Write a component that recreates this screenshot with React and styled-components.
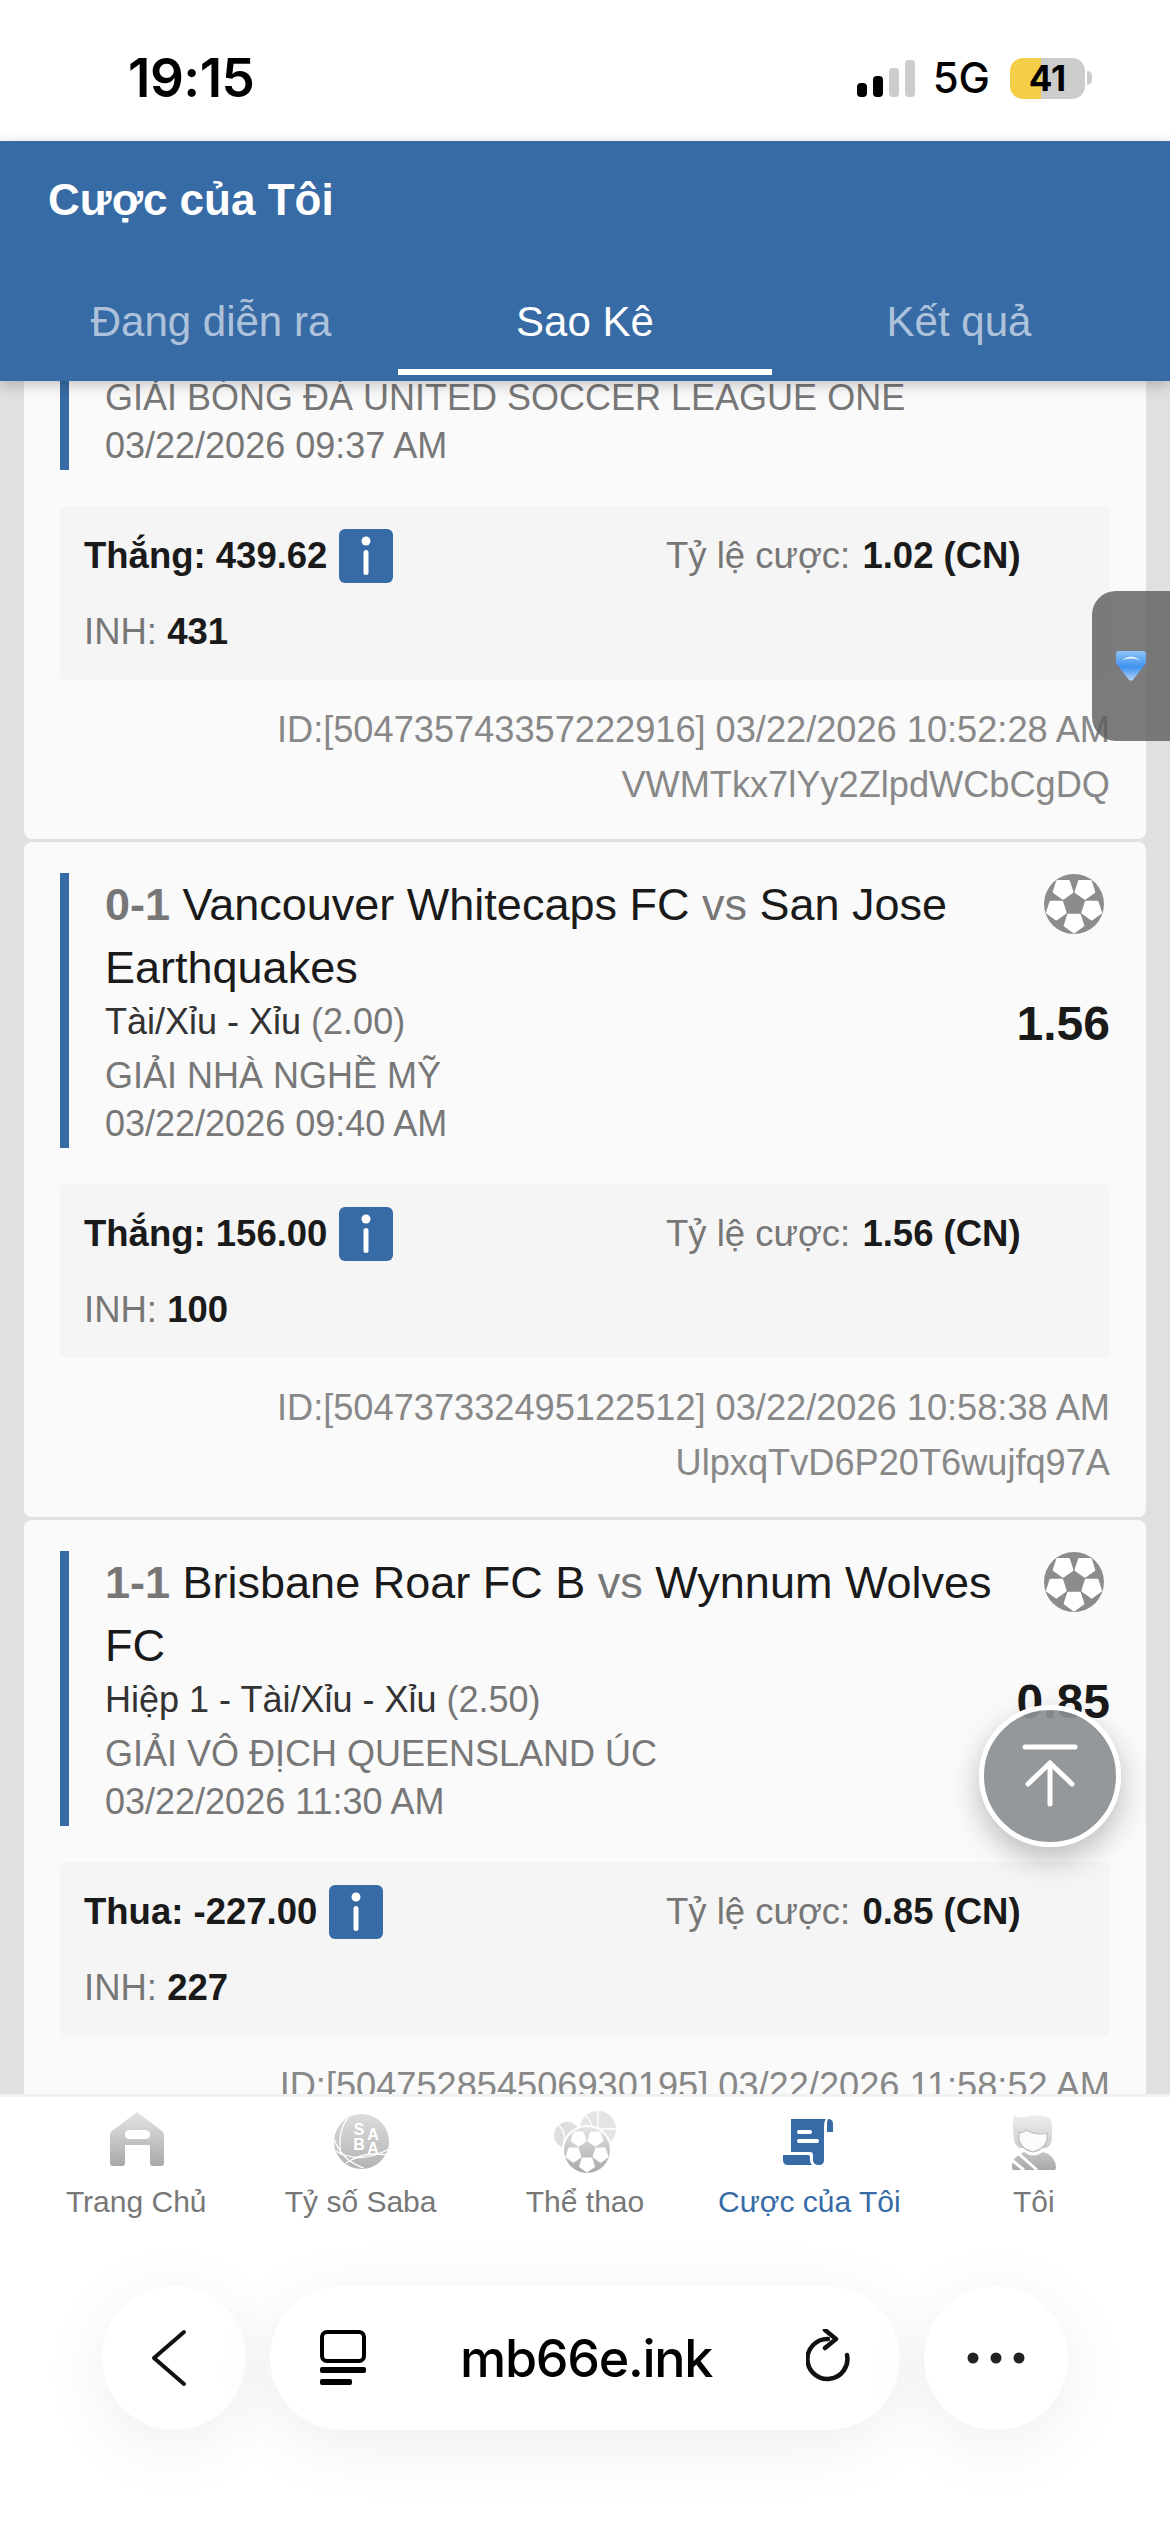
import React from 'react';
import styled, { createGlobalStyle } from 'styled-components';

const BLUE = '#376ba5';

const GlobalStyle = createGlobalStyle`
  html, body { margin: 0; padding: 0; background: #fff; }
  body { font-family: "Liberation Sans", Arial, sans-serif; }
  * { box-sizing: border-box; }
`;

const Page = styled.div`
  position: relative;
  width: 1170px;
  height: 2532px;
  overflow: hidden;
  display: flex;
  flex-direction: column;
  background: #fff;
`;

const StatusBar = styled.div`
  height: 141px;
  flex: none;
  display: flex;
  justify-content: space-between;
  align-items: center;
  padding: 15px 85px 0 128px;
  font-family: Inter, "Liberation Sans", sans-serif;
  color: #000;
`;

const Time = styled.div`
  font-size: 53px;
  font-weight: 600;
  letter-spacing: -0.5px;
  line-height: 1;
`;

const StatusRight = styled.div`
  display: flex;
  align-items: center;
`;

const Signal = styled.div`
  display: flex;
  align-items: flex-end;
  gap: 6px;
  height: 37px;
  margin-right: 18px;
`;

const SignalBar = styled.span`
  display: block;
  width: 10px;
  height: ${(p) => p.$h}px;
  border-radius: 4px;
  background: ${(p) => (p.$on ? '#000' : '#ccc')};
`;

const NetLabel = styled.div`
  font-size: 42px;
  font-weight: 500;
  line-height: 1;
  margin-right: 20px;
`;

const Battery = styled.div`
  position: relative;
  width: 75px;
  height: 41px;
  border-radius: 13px;
  background: linear-gradient(90deg, #f5ce47 0 31px, #cccccc 31px);
  font-size: 35px;
  font-weight: 700;
  line-height: 41px;
  text-align: center;

  &::after {
    content: '';
    position: absolute;
    right: -7px;
    top: 13px;
    width: 5px;
    height: 14px;
    border-radius: 0 6px 6px 0;
    background: #ccc;
  }
`;

const Header = styled.header`
  flex: none;
  height: 240px;
  background: ${BLUE};
  position: relative;
  z-index: 3;
  box-shadow: 0 4px 14px rgba(0, 0, 0, 0.22);
  padding: 0 24px;
`;

const Title = styled.h1`
  margin: 0;
  height: 118px;
  padding: 34px 0 0 24px;
  font-size: 44px;
  line-height: 50px;
  font-weight: 700;
  color: #fff;
`;

const Tabs = styled.div`
  display: grid;
  grid-template-columns: repeat(3, 1fr);
`;

const Tab = styled.div`
  height: 116px;
  padding-top: 38px;
  text-align: center;
  font-size: 42px;
  line-height: 50px;
  color: ${(p) => (p.$active ? '#fff' : 'rgba(255,255,255,0.62)')};
  border-bottom: 6px solid ${(p) => (p.$active ? '#fff' : 'transparent')};
`;

const List = styled.main`
  flex: 1;
  min-height: 0;
  overflow: hidden;
  background: #e0e0e0;
  padding: 0 24px;
  display: flex;
  flex-direction: column;
  gap: 3px;
`;

const Card = styled.section`
  flex: none;
  background: #fafafa;
  border-radius: ${(p) => (p.$cut ? '0 0 8px 8px' : '8px')};
  padding: ${(p) => (p.$cut ? '0' : '31px')} 36px 27px;
`;

const MatchBlock = styled.div`
  position: relative;
  border-left: 9px solid ${BLUE};
  padding-left: 36px;
  margin-top: ${(p) => (p.$cut ? '-14px' : '0')};
  display: flex;
  flex-direction: column;
`;

const MatchTitle = styled.div`
  font-size: 45px;
  line-height: 63px;
  color: #1a1a1a;
  padding-right: 100px;
`;

const Score = styled.b`
  color: #777;
`;

const Vs = styled.span`
  color: #777;
`;

const BallSlot = styled.div`
  position: absolute;
  top: 0;
  right: 5px;
  width: 62px;
  height: 62px;
`;

const Odds = styled.div`
  position: absolute;
  right: 0;
  top: 123px;
  font-size: 48px;
  line-height: 56px;
  font-weight: 700;
  color: #1a1a1a;
`;

const Market = styled.div`
  font-size: 36px;
  line-height: 46px;
  color: #333;
`;

const Muted = styled.span`
  color: #777;
`;

const League = styled.div`
  font-size: 36px;
  line-height: 46px;
  margin-top: 8px;
  color: #777;
`;

const DateLine = styled.div`
  font-size: 36px;
  line-height: 46px;
  margin-top: 2px;
  margin-bottom: 1px;
  color: #777;
`;

const InfoBox = styled.div`
  margin-top: 36px;
  height: 174px;
  background: #f5f5f5;
  border-radius: 6px;
  padding: 23px 24px 0;
  display: grid;
  grid-template-columns: 582px 1fr;
  grid-auto-rows: 54px;
  row-gap: 22px;
  align-items: center;
  font-size: 36.5px;
  color: #777;
`;

const Cell = styled.div`
  display: flex;
  align-items: center;
  white-space: pre;
`;

const Strong = styled.b`
  color: #1a1a1a;
`;

const OddsValue = styled(Strong)`
  margin-left: 2px;
`;

const InfoBtn = styled.span`
  width: 54px;
  height: 54px;
  margin-left: 12px;
  border-radius: 6px;
  background: ${BLUE};
  display: flex;
  align-items: center;
  justify-content: center;
`;

const Ids = styled.div`
  margin-top: 22px;
  text-align: right;
  font-size: 36.2px;
  line-height: 55px;
  color: #888;
`;

const BottomNav = styled.nav`
  flex: none;
  position: relative;
  z-index: 3;
  height: 146px;
  background: #fff;
  border-top: 3px solid #f0f0f0;
  padding: 0 24px;
  display: grid;
  grid-template-columns: repeat(5, 1fr);
`;

const NavItem = styled.div`
  display: flex;
  flex-direction: column;
  align-items: center;
  color: ${(p) => (p.$active ? BLUE : '#777')};
  font-size: 30px;
  line-height: 36px;
  padding-top: 8px;
`;

const NavIcon = styled.svg`
  width: 70px;
  height: 70px;
  margin-bottom: 9px;
  display: block;
`;

const BrowserBar = styled.div`
  flex: none;
  height: 292px;
  position: relative;
  z-index: 3;
  background: #fff;
  padding: 46px 102px 0;
  display: flex;
  gap: 24px;
  align-items: flex-start;
`;

const RoundBtn = styled.div`
  width: 144px;
  height: 144px;
  flex: none;
  border-radius: 72px;
  background: #fff;
  box-shadow: 0 14px 70px rgba(0, 0, 0, 0.07);
  display: flex;
  align-items: center;
  justify-content: center;
`;

const UrlPill = styled.div`
  flex: 1;
  height: 144px;
  border-radius: 72px;
  background: #fff;
  box-shadow: 0 14px 70px rgba(0, 0, 0, 0.07);
  display: flex;
  align-items: center;
  justify-content: space-between;
  padding: 0 46px 0 50px;
`;

const UrlText = styled.div`
  font-family: Inter, "Liberation Sans", sans-serif;
  font-size: 52px;
  font-weight: 500;
  letter-spacing: -1.3px;
  color: #000;
`;

const SideTab = styled.div`
  position: absolute;
  z-index: 4;
  right: 0;
  top: 591px;
  width: 78px;
  height: 150px;
  border-radius: 24px 0 0 24px;
  background: rgba(95, 95, 95, 0.82);
  display: flex;
  align-items: center;
  padding-left: 24px;
`;

const ToTop = styled.div`
  position: absolute;
  z-index: 4;
  left: 979px;
  top: 1705px;
  width: 142px;
  height: 142px;
  border-radius: 50%;
  border: 5px solid #fff;
  background: rgba(140, 143, 147, 0.92);
  box-shadow: 0 12px 30px rgba(0, 0, 0, 0.25);
  display: flex;
  align-items: center;
  justify-content: center;
`;

// football: grey disc with five white patches round a centre patch
const pentagon = (cx, cy, r, start) =>
  [0, 1, 2, 3, 4]
    .map((i) => {
      const a = ((start + i * 72) * Math.PI) / 180;
      return `${(cx + r * Math.cos(a)).toFixed(2)},${(cy + r * Math.sin(a)).toFixed(2)}`;
    })
    .join(' ');

const BallPatches = ({ cx, cy, r, fill }) => (
  <g fill={fill} stroke={fill} strokeLinejoin="round" strokeWidth={r * 0.08}>
    {[90, 162, 234, 306, 18].map((deg) => {
      const a = (deg * Math.PI) / 180;
      return (
        <polygon
          key={deg}
          points={pentagon(cx + r * 0.62 * Math.cos(a), cy + r * 0.62 * Math.sin(a), r * 0.32, deg)}
        />
      );
    })}
  </g>
);

const Ball = () => (
  <svg width="62" height="62" viewBox="0 0 62 62">
    <circle cx="31" cy="31" r="30" fill="#8c8c8c" />
    <BallPatches cx={31} cy={31} r={30} fill="#fff" />
  </svg>
);

const GreyGradient = ({ id, from = '#e4e4e4', to = '#a8a8a8' }) => (
  <defs>
    <linearGradient id={id} x1="0" y1="0" x2="0" y2="1">
      <stop offset="0" stopColor={from} />
      <stop offset="1" stopColor={to} />
    </linearGradient>
  </defs>
);

const HomeIcon = () => (
  <NavIcon viewBox="0 0 70 70">
    <GreyGradient id="home" />
    <path
      fill="url(#home)"
      fillRule="evenodd"
      d="M36 7 L61 26 Q63 28 63 30 V58 Q63 61 60 61 H52 Q49 61 49 58 V40 H24 V58 Q24 61 21 61 H12 Q9 61 9 58 V30 Q9 28 11 26 Z M29 25 Q24 25 24 29.5 Q24 34 29 34 H44 Q49 34 49 29.5 Q49 25 44 25 Z"
    />
  </NavIcon>
);

const SabaIcon = () => (
  <NavIcon viewBox="0 0 70 70">
    <GreyGradient id="saba" from="#dcdcdc" to="#b4b4b4" />
    <circle cx="35.5" cy="36.5" r="27.5" fill="url(#saba)" />
    <g fill="none" stroke="#fff" strokeWidth="1.3">
      <path d="M8 34 Q16 56 38 63" />
      <path d="M10 46 Q34 60 63 44" />
      <path d="M20 58 Q38 46 61 50" />
      <path d="M22 13 Q11 26 15 50" />
    </g>
    <g fill="#fff" fontFamily="Liberation Sans" fontWeight="700" fontSize="16" textAnchor="middle">
      <text x="33" y="30">S</text>
      <text x="47" y="35">A</text>
      <text x="33" y="45">B</text>
      <text x="47" y="49">A</text>
    </g>
  </NavIcon>
);

const SportsIcon = () => (
  <NavIcon viewBox="0 0 70 70">
    <GreyGradient id="sports" />
    <circle cx="17" cy="30" r="13" fill="#dedede" />
    <path d="M9 20 Q18 30 13 42" fill="none" stroke="#fff" strokeWidth="1.3" />
    <circle cx="48" cy="24" r="18" fill="#e4e4e4" />
    <path d="M48 6 V30 M30 24 H66 M36 11 Q46 20 38 34" fill="none" stroke="#fff" strokeWidth="1.3" />
    <circle cx="37" cy="45" r="25" fill="#fff" />
    <circle cx="37" cy="45" r="23" fill="url(#sports)" />
    <BallPatches cx={37} cy={45} r={23} fill="#fff" />
  </NavIcon>
);

const BillIcon = () => (
  <NavIcon viewBox="0 0 70 70">
    <path
      fill={BLUE}
      d="M17 14 H52 Q50 16 50 22 V55 Q50 60 45 60 Q39 60 39 55 V50 Q39 47 36 47 H17 Z"
    />
    <path fill={BLUE} d="M54 14 Q59 14 59 19 V27 H53 V19 Q53 16 54 14 Z" />
    <path fill={BLUE} d="M9 50 H34 Q36 50 36 52 V55 Q36 58 38 60 H14 Q9 60 9 55 Z" />
    <rect x="23" y="25" width="15" height="4" rx="2" fill="#fff" />
    <rect x="23" y="34" width="22" height="4" rx="2" fill="#fff" />
  </NavIcon>
);

const PersonIcon = () => (
  <NavIcon viewBox="0 0 70 70">
    <GreyGradient id="person-hair" from="#eeeeee" to="#cccccc" />
    <GreyGradient id="person-body" from="#c4c4c4" to="#a8a8a8" />
    <path
      fill="url(#person-hair)"
      d="M15 10 Q19 13 25 12 Q41 8 51 13 Q54 19 53 28 V34 Q52 41 47 43 H21 Q16 41 15 34 Q13 20 15 10 Z"
    />
    <path
      d="M20 27 Q24 29 27 25 Q38 31 48 28 V35 Q46 44 34 47 Q22 44 20 35 Z"
      fill="#fbfbfb"
      stroke="#bdbdbd"
      strokeWidth="1.2"
    />
    <path fill="url(#person-body)" d="M25 47 Q34 54 44 47 Q56 50 57 62 Q57 65 55 65 H15 Q13 65 13 62 Q13 52 25 47 Z" />
    <path d="M20 49 L38 65 M14 56 L25 65" stroke="#fff" strokeWidth="3" fill="none" />
  </NavIcon>
);

const NAV_ITEMS = [
  { label: 'Trang Chủ', Icon: HomeIcon },
  { label: 'Tỷ số Saba', Icon: SabaIcon },
  { label: 'Thể thao', Icon: SportsIcon },
  { label: 'Cược của Tôi', Icon: BillIcon, active: true },
  { label: 'Tôi', Icon: PersonIcon },
];

const BETS = [
  {
    cut: true,
    league: 'GIẢI BÓNG ĐÁ UNITED SOCCER LEAGUE ONE',
    date: '03/22/2026 09:37 AM',
    result: 'Thắng: 439.62',
    odds: '1.02 (CN)',
    stake: '431',
    id: 'ID:[504735743357222916] 03/22/2026 10:52:28 AM',
    ref: 'VWMTkx7lYy2ZlpdWCbCgDQ',
  },
  {
    score: '0-1',
    home: 'Vancouver Whitecaps FC',
    away: 'San Jose Earthquakes',
    market: 'Tài/Xỉu - Xỉu',
    line: '(2.00)',
    price: '1.56',
    league: 'GIẢI NHÀ NGHỀ MỸ',
    date: '03/22/2026 09:40 AM',
    result: 'Thắng: 156.00',
    odds: '1.56 (CN)',
    stake: '100',
    id: 'ID:[504737332495122512] 03/22/2026 10:58:38 AM',
    ref: 'UlpxqTvD6P20T6wujfq97A',
  },
  {
    score: '1-1',
    home: 'Brisbane Roar FC B',
    away: 'Wynnum Wolves FC',
    market: 'Hiệp 1 - Tài/Xỉu - Xỉu',
    line: '(2.50)',
    price: '0.85',
    league: 'GIẢI VÔ ĐỊCH QUEENSLAND ÚC',
    date: '03/22/2026 11:30 AM',
    result: 'Thua: -227.00',
    odds: '0.85 (CN)',
    stake: '227',
    id: 'ID:[504752854506930195] 03/22/2026 11:58:52 AM',
    ref: '',
  },
];

const BetCard = ({ bet }) => (
  <Card $cut={bet.cut}>
    <MatchBlock $cut={bet.cut}>
      {!bet.cut && (
        <>
          <MatchTitle>
            <Score>{bet.score}</Score> {bet.home} <Vs>vs</Vs> {bet.away}
          </MatchTitle>
          <BallSlot>
            <Ball />
          </BallSlot>
          <Odds>{bet.price}</Odds>
          <Market>
            {bet.market} <Muted>{bet.line}</Muted>
          </Market>
        </>
      )}
      <League>{bet.league}</League>
      <DateLine>{bet.date}</DateLine>
    </MatchBlock>
    <InfoBox>
      <Cell>
        <Strong>{bet.result}</Strong>
        <InfoBtn>
          <svg width="12" height="42" viewBox="0 0 12 42">
            <circle cx="6" cy="6" r="4.5" fill="#fff" />
            <rect x="3.5" y="15" width="5" height="25" rx="2.5" fill="#fff" />
          </svg>
        </InfoBtn>
      </Cell>
      <Cell>
        Tỷ lệ cược: <OddsValue>{bet.odds}</OddsValue>
      </Cell>
      <Cell>
        INH: <Strong>{bet.stake}</Strong>
      </Cell>
    </InfoBox>
    <Ids>
      <div>{bet.id}</div>
      <div>{bet.ref}</div>
    </Ids>
  </Card>
);

export default function App() {
  return (
    <Page>
      <GlobalStyle />
      <StatusBar>
        <Time>19:15</Time>
        <StatusRight>
          <Signal>
            <SignalBar $h={14} $on />
            <SignalBar $h={21} $on />
            <SignalBar $h={29} />
            <SignalBar $h={37} />
          </Signal>
          <NetLabel>5G</NetLabel>
          <Battery>41</Battery>
        </StatusRight>
      </StatusBar>

      <Header>
        <Title>Cược của Tôi</Title>
        <Tabs>
          <Tab>Đang diễn ra</Tab>
          <Tab $active>Sao Kê</Tab>
          <Tab>Kết quả</Tab>
        </Tabs>
      </Header>

      <List>
        {BETS.map((bet) => (
          <BetCard key={bet.id} bet={bet} />
        ))}
      </List>

      <BottomNav>
        {NAV_ITEMS.map(({ label, Icon, active }) => (
          <NavItem key={label} $active={active}>
            <Icon />
            {label}
          </NavItem>
        ))}
      </BottomNav>

      <BrowserBar>
        <RoundBtn>
          <svg width="40" height="60" viewBox="0 0 40 60" style={{ marginLeft: -10 }}>
            <path d="M35 4 L5 30 L35 56" fill="none" stroke="#111" strokeWidth="4" strokeLinecap="round" strokeLinejoin="round" />
          </svg>
        </RoundBtn>
        <UrlPill>
          <svg width="46" height="56" viewBox="0 0 46 56">
            <rect x="2" y="2" width="42" height="29" rx="5" fill="none" stroke="#000" strokeWidth="4" />
            <rect x="0" y="37" width="46" height="6" rx="2" fill="#000" />
            <rect x="0" y="49" width="32" height="6" rx="2" fill="#000" />
          </svg>
          <UrlText>mb66e.ink</UrlText>
          <svg width="48" height="58" viewBox="0 0 48 58">
            <path d="M41 26 A20 20 0 1 1 22 10" fill="none" stroke="#111" strokeWidth="4.5" strokeLinecap="round" />
            <path d="M19 1 L30 10 L19 19" fill="none" stroke="#111" strokeWidth="4.5" strokeLinecap="round" strokeLinejoin="round" />
          </svg>
        </UrlPill>
        <RoundBtn>
          <svg width="58" height="12" viewBox="0 0 58 12">
            <circle cx="6" cy="6" r="5.5" fill="#222" />
            <circle cx="29" cy="6" r="5.5" fill="#222" />
            <circle cx="52" cy="6" r="5.5" fill="#222" />
          </svg>
        </RoundBtn>
      </BrowserBar>

      <SideTab>
        <svg width="30" height="30" viewBox="0 0 30 30">
          <defs>
            <linearGradient id="gem" x1="0" y1="0" x2="0" y2="1">
              <stop offset="0" stopColor="#8fc2f7" />
              <stop offset="0.55" stopColor="#3f92f0" />
              <stop offset="1" stopColor="#b4d5f7" />
            </linearGradient>
          </defs>
          <path d="M3 0 H27 Q30 0 30 3 V12 L17 29 Q15 30 13 29 L0 12 V3 Q0 0 3 0 Z" fill="url(#gem)" />
          <path d="M6 9 Q15 2 24 9 Q15 6 6 9 Z" fill="#fff" opacity="0.85" />
        </svg>
      </SideTab>

      <ToTop>
        <svg width="60" height="64" viewBox="0 0 60 64">
          <g fill="none" stroke="#fff" strokeWidth="5" strokeLinecap="round" strokeLinejoin="round">
            <path d="M5 3 H55" />
            <path d="M30 19 V60" />
            <path d="M8 40 L30 19 L52 40" />
          </g>
        </svg>
      </ToTop>
    </Page>
  );
}
